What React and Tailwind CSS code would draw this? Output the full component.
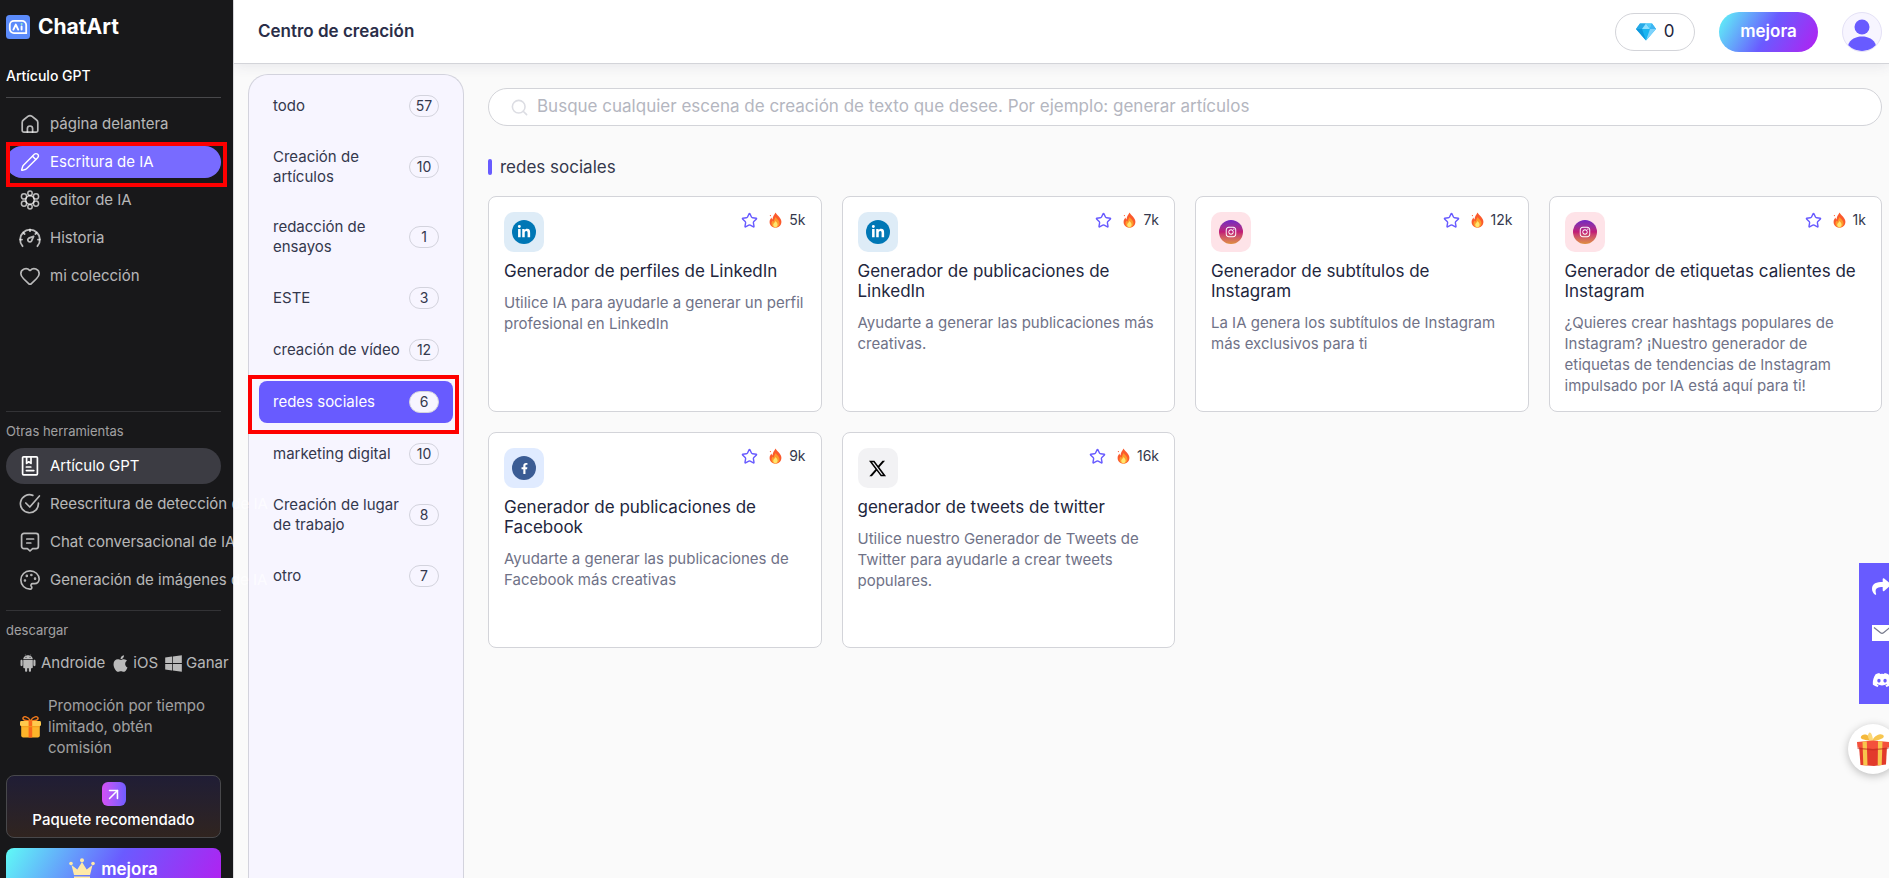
import { Heart, Palette, Pencil, Search, Star, ArrowUpRight } from 'lucide-react';
import { AiFillAndroid } from 'react-icons/ai';
import { FaApple, FaWindows, FaLinkedinIn, FaFacebookF, FaInstagram, FaShare, FaDiscord } from 'react-icons/fa';
import { FaXTwitter } from 'react-icons/fa6';

const stroke = { width: 22, height: 22, viewBox: '0 0 22 22', fill: 'none', stroke: 'currentColor', strokeWidth: 1.7, strokeLinecap: 'round', strokeLinejoin: 'round', 'aria-hidden': true };

const HomeIcon = () => (
  <svg {...stroke}>
    <path d="M5 19.200a1.800 1.800 0 0 1-1.800-1.800V9.400a3 3 0 0 1 1.200-2.400l4.800-3.800a3 3 0 0 1 3.600 0L17.600 7a3 3 0 0 1 1.200 2.400v8a1.800 1.800 0 0 1-1.800 1.800z" />
    <path d="M8.400 19v-3.400a2.600 2.600 0 0 1 5.200 0V19" />
  </svg>
);

const FlowerIcon = () => (
  <svg {...stroke} strokeWidth={1.5}>
    <circle cx="11" cy="11" r="4.200" />
    <circle cx="11" cy="4.200" r="2.200" />
    <circle cx="11" cy="17.800" r="2.200" />
    <circle cx="5" cy="7.400" r="2.600" />
    <circle cx="17" cy="7.400" r="2.600" />
    <circle cx="5" cy="14.600" r="2.600" />
    <circle cx="17" cy="14.600" r="2.600" />
  </svg>
);

const GaugeIcon = () => (
  <svg {...stroke} strokeWidth={1.8}>
    <path d="M3.600 19.200a9.900 9.900 0 1 1 14.800 0" />
    <path d="M11 2.600v1.600M1.400 12.600H3M19 12.600h1.600M4.600 6l1 1M17.400 6l-1 1" />
    <path d="M14.600 9.400l-4.800 1.800a2 2 0 1 0 2.800 2.600z" />
  </svg>
);

const BookIcon = () => (
  <svg {...stroke}>
    <rect x="3.600" y="1.800" width="14.800" height="18" rx="1" />
    <path d="M7.600 2v6.400l2.200-1.600L12 8.400V2M7.400 12h4.400M7.400 15.600h7.400" />
  </svg>
);

const CheckIcon = () => (
  <svg {...stroke}>
    <path d="M13.800 2.400A9 9 0 1 0 19.400 10" />
    <path d="M6.800 10l4 4L20.400 3" />
  </svg>
);

const ChatIcon = () => (
  <svg {...stroke}>
    <path d="M5 2.400h12a2.400 2.400 0 0 1 2.400 2.400v10.400a2.400 2.400 0 0 1-2.400 2.400h-3.400L11 20l-2.600-2.400H5a2.400 2.400 0 0 1-2.400-2.400V4.800A2.400 2.400 0 0 1 5 2.400z" />
    <path d="M7.800 8h6.800M7.800 12h4" />
  </svg>
);

const Flame = () => (
  <svg width="13" height="16" viewBox="0 0 13 16" aria-hidden="true">
    <path d="M6.600.4c1 2.600 5.800 5 5.800 9.400 0 3.600-2.600 5.800-5.900 5.800S.6 13.400.6 10c0-2.200 1-3.400 1.800-4.600.2 1 .5 1.600 1.100 2C3.600 4.400 5.200 2.800 6.600.4z" fill="#fb5a2c" />
    <path d="M6.800 5c.7 2 3.700 3.200 3.700 6.200 0 2.700-1.800 4.200-4 4.200s-4-1.500-4-4c0-1.300.7-2.200 1.300-2.800.2.700.5 1 1 1.200C4.900 7.800 5.800 6.400 6.800 5z" fill="#fd9a2b" />
    <path d="M6.600 9c.5 1.200 2 1.700 2 3.600 0 1.700-1 2.700-2.200 2.700s-2.200-1-2.200-2.500C4.200 11.200 6 10.600 6.600 9z" fill="#ffe56e" />
    <circle cx="1.400" cy="3.600" r=".6" fill="#fb5a2c" />
  </svg>
);

const Gem = () => (
  <svg width="20" height="18" viewBox="0 0 20 18" aria-hidden="true">
    <path d="M4 .5h12L20 6l-10 11.500L0 6z" fill="#19b5f1" />
    <path d="M4 .5h6L6 6H0z" fill="#27a9e6" />
    <path d="M10 .5L14 6H6z" fill="#8fe0ff" />
    <path d="M10 .5h6L14 6z" fill="#4fcbfb" />
    <path d="M16 .5L20 6h-6z" fill="#3fb4f2" />
    <path d="M0 6h6l4 11.500z" fill="#0e98dd" />
    <path d="M20 6h-6l-4 11.500z" fill="#7dd2fb" />
  </svg>
);

const GiftYellow = () => (
  <svg width="21" height="22" viewBox="0 0 21 22" className="shrink-0" aria-hidden="true">
    <path d="M10.500 5C8 0 3.500 0 3 2s3 3 7.500 3zM10.500 5C13 0 17.500 0 18 2s-3 3-7.500 3z" fill="none" stroke="#f07a1c" strokeWidth="1.500" />
    <rect x="1.200" y="9" width="18.600" height="12.500" rx="2" fill="#fdb42a" />
    <rect x="0" y="5" width="21" height="5.200" rx="1.400" fill="#ffc94d" />
    <rect x="8.600" y="5" width="3.600" height="16.500" fill="#f9671b" />
    <path d="M1.200 10.200h18.600v1H1.200z" fill="#f29a1b" />
  </svg>
);

const GiftRed = () => (
  <svg width="32" height="34" viewBox="0 0 32 34" aria-hidden="true">
    <path d="M15 9C11 8 5 8 4 6s3-4 5.500-3.200S14 6 15 9z" fill="#f5b93c" />
    <path d="M15 9c1-3 5-7 8.500-6.800S28 5 25 6.500 19 9 15 9z" fill="#f7c650" />
    <path d="M13 9C11 6 10 3 12 1s4 4 4 8z" fill="#fbd878" />
    <path d="M2 14h28l-1 18.500L17 34 3.500 33z" fill="#e23b2c" />
    <path d="M0 10l16-1.500L32 10v5.500L16 17 .5 15.500z" fill="#f4503c" />
    <path d="M5.500 9.500h4.300l.7 23.900-4.200-.2zM21 9.300h4.500l-.8 23.700-4 .5z" fill="#f8c54c" />
    <path d="M.5 15.500L16 17l15.500-1.500v1.400L16 18.400.5 17z" fill="#bf2b20" opacity=".6" />
  </svg>
);

const Crown = () => (
  <svg width="26" height="24" viewBox="0 0 26 24" aria-hidden="true">
    <path d="M2.500 7l5.800 4.500L13 4l4.700 7.500L23.500 7 21 17H5z" fill="#ffe9a8" />
    <path d="M5 18.500h16V21H5z" fill="#ffe9a8" />
    <circle cx="13" cy="2.200" r="2" fill="#ffe9a8" />
    <circle cx="2" cy="5.500" r="1.800" fill="#ffe9a8" />
    <circle cx="24" cy="5.500" r="1.800" fill="#ffe9a8" />
  </svg>
);

const Logo = () => (
  <svg width="24" height="24" viewBox="0 0 24 24" aria-hidden="true">
    <rect width="24" height="24" rx="3.500" fill="#5b8bfb" />
    <path d="M8 5.800h8a4.200 4.200 0 0 1 4.200 4.200v8.200H8A4.200 4.200 0 0 1 3.800 14v-4A4.200 4.200 0 0 1 8 5.800z" fill="none" stroke="#fff" strokeWidth="1.800" />
    <path d="M7.400 14.600l2.400-5 2.400 5M15.600 11.400v3.200" fill="none" stroke="#fff" strokeWidth="1.900" strokeLinecap="round" strokeLinejoin="round" />
    <circle cx="15.600" cy="8.900" r="1" fill="#8ff5c8" />
  </svg>
);

const menu = [
  { label: 'página delantera', icon: <HomeIcon /> },
  { label: 'Escritura de IA', icon: <Pencil size={20} strokeWidth={1.7} />, active: true },
  { label: 'editor de IA', icon: <FlowerIcon /> },
  { label: 'Historia', icon: <GaugeIcon /> },
  { label: 'mi colección', icon: <Heart size={22} strokeWidth={1.8} /> },
];

const tools = [
  { label: 'Artículo GPT', icon: <BookIcon />, active: true },
  { label: 'Reescritura de detección de IA', icon: <CheckIcon /> },
  { label: 'Chat conversacional de IA', icon: <ChatIcon /> },
  { label: 'Generación de imágenes de IA', icon: <Palette size={22} strokeWidth={1.8} /> },
];

const categories = [
  { name: 'todo', count: 57 },
  { name: 'Creación de artículos', count: 10 },
  { name: 'redacción de ensayos', count: 1 },
  { name: 'ESTE', count: 3 },
  { name: 'creación de vídeo', count: 12 },
  { name: 'redes sociales', count: 6, active: true },
  { name: 'marketing digital', count: 10 },
  { name: 'Creación de lugar de trabajo', count: 8 },
  { name: 'otro', count: 7 },
];

const cards = [
  { brand: 'linkedin', title: 'Generador de perfiles de LinkedIn', text: 'Utilice IA para ayudarle a generar un perfil profesional en LinkedIn', uses: '5k' },
  { brand: 'linkedin', title: 'Generador de publicaciones de LinkedIn', text: 'Ayudarte a generar las publicaciones más creativas.', uses: '7k' },
  { brand: 'instagram', title: 'Generador de subtítulos de Instagram', text: 'La IA genera los subtítulos de Instagram más exclusivos para ti', uses: '12k' },
  { brand: 'instagram', title: 'Generador de etiquetas calientes de Instagram', text: '¿Quieres crear hashtags populares de Instagram? ¡Nuestro generador de etiquetas de tendencias de Instagram impulsado por IA está aquí para ti!', uses: '1k' },
  { brand: 'facebook', title: 'Generador de publicaciones de Facebook', text: 'Ayudarte a generar las publicaciones de Facebook más creativas', uses: '9k' },
  { brand: 'x', title: 'generador de tweets de twitter', text: 'Utilice nuestro Generador de Tweets de Twitter para ayudarle a crear tweets populares.', uses: '16k' },
];

const brands = {
  linkedin: { box: 'bg-[#deecf7]', dot: 'bg-[#0077b5] text-white', icon: <FaLinkedinIn size={14} /> },
  instagram: { box: 'bg-[#fee3e8]', dot: 'bg-linear-to-b from-[#7024c4] via-[#c21975] to-[#df8f3b] text-white', icon: <FaInstagram size={12} /> },
  facebook: { box: 'bg-[#e0ebff]', dot: 'bg-[#3b5c94] text-white', icon: <FaFacebookF size={11} /> },
  x: { box: 'bg-[#f2f2f4]', dot: 'text-black', icon: <FaXTwitter size={19} /> },
};

function Sidebar() {
  return (
    <aside className="relative z-10 w-[233px] shrink-0 bg-[#18181a] pr-3 pl-[6px] text-[15px] text-white/70">
      <a href="#" className="flex items-center gap-2 pt-[15px] text-white">
        <Logo />
        <span className="text-[21px] leading-6 font-bold">ChatArt</span>
      </a>
      <h2 className="mt-6 border-b border-[#48484b] pt-[3px] pb-[11px] text-sm leading-5 font-medium text-white">Artículo GPT</h2>

      <nav className="mt-[10px] flex flex-col gap-[6px]">
        {menu.map((m) => (
          <a key={m.label} href="#" className={`relative flex h-8 items-center gap-[9px] rounded-full pl-3 whitespace-nowrap ${m.active ? 'bg-[#786bff] text-white' : ''}`}>
            <span className="flex w-[23px] shrink-0 justify-center">{m.icon}</span>
            {m.label}
            {m.active && <span className="absolute -top-1 -right-[6px] -bottom-[9px] left-0 border-4 border-[#fe0000]" />}
          </a>
        ))}
      </nav>

      <h3 className="mt-[119px] border-t border-[#333336] pt-[9px] pb-px text-[13px] leading-5 text-white/60">Otras herramientas</h3>
      <nav className="mt-[6px] flex flex-col gap-[2px]">
        {tools.map((t) => (
          <a key={t.label} href="#" className={`flex h-9 items-center gap-[9px] rounded-full pl-3 whitespace-nowrap ${t.active ? 'bg-[#3c3c43] text-white' : ''}`}>
            <span className="flex w-[23px] shrink-0 justify-center">{t.icon}</span>
            {t.label}
          </a>
        ))}
      </nav>

      <h3 className="mt-3 border-t border-[#333336] pt-[9px] text-[13px] leading-5 text-white/60">descargar</h3>
      <div className="mt-3 flex h-[22px] items-center gap-[6px] pl-3 whitespace-nowrap">
        <a href="#" className="flex items-center gap-[3px]"><AiFillAndroid size={20} />Androide</a>
        <a href="#" className="flex items-center gap-[3px]"><FaApple size={19} />iOS</a>
        <a href="#" className="flex items-center gap-[3px]"><FaWindows size={19} />Ganar</a>
      </div>
      <a href="#" className="mt-[21px] flex items-center gap-[7px] pr-3 pl-[14px] leading-[21px] text-white/60">
        <GiftYellow />
        Promoción por tiempo limitado, obtén comisión
      </a>

      <button className="mt-[17px] flex h-[63px] w-full flex-col items-center rounded-lg border border-[#48484b] bg-linear-to-b from-[#201d35] to-[#30241f] pt-[6px] font-medium text-white">
        <span className="flex size-6 items-center justify-center rounded-md bg-linear-to-r from-[#d44ff5] to-[#6f5cff]"><ArrowUpRight size={19} /></span>
        <span className="mt-1 leading-5">Paquete recomendado</span>
      </button>
      <button className="mt-[10px] flex h-11 w-full items-center justify-center gap-[6px] rounded-lg bg-linear-[120deg] from-[#5ffbf6] via-[#6a5bff] to-[#b41ff0] text-[17px] font-semibold text-white">
        <Crown />
        mejora
      </button>
    </aside>
  );
}

function Categories() {
  return (
    <nav className="flex w-[216px] shrink-0 flex-col gap-[10px] rounded-t-[20px] border border-b-0 border-[#d3d3dd] bg-[#f7f5ff] px-[10px] pt-[10px] text-[15px] leading-5 text-[#34384d]">
      {categories.map((c) => (
        <button key={c.name} className={`relative flex items-center justify-between rounded-lg px-[14px] py-[10px] text-left ${c.active ? 'bg-[#685bff] text-white' : ''}`}>
          <span className="w-[132px]">{c.name}</span>
          <span className="flex h-[22px] w-[30px] shrink-0 items-center justify-center rounded-full border border-[#d3d3dd] bg-[#f7f5ff] text-sm text-[#34384d]">{c.count}</span>
          {c.active && <span className="absolute -top-[6px] -right-[6px] -bottom-[11px] -left-[11px] border-4 border-[#fe0000]" />}
        </button>
      ))}
    </nav>
  );
}

function Card({ card }) {
  const b = brands[card.brand];
  return (
    <article className="rounded-lg border border-[#d3d4d9] bg-white p-[15px]">
      <div className="flex items-start justify-between">
        <div className={`flex size-10 items-center justify-center rounded-[10px] ${b.box}`}>
          <span className={`flex size-6 items-center justify-center rounded-full ${b.dot}`}>{b.icon}</span>
        </div>
        <div className="flex h-4 items-center text-sm text-[#34384d]">
          <button aria-label="Añadir a mi colección" className="mr-[11px] text-[#685bff]"><Star size={17} strokeWidth={2} strokeLinejoin="miter" /></button>
          <Flame />
          <span className="ml-[7px]">{card.uses}</span>
        </div>
      </div>
      <h3 className="mt-[9px] text-[17px] leading-5 text-[#22263d]">{card.title}</h3>
      <p className="mt-[11px] text-[15px] leading-[21px] text-[#6f7287]">{card.text}</p>
    </article>
  );
}

export default function App() {
  return (
    <div className="flex h-screen overflow-hidden bg-[#fafafa] font-[Inter,'Open_Sans',sans-serif]">
      <Sidebar />
      <div className="relative flex min-w-0 flex-1 flex-col border-l border-[#dcdcdf]">
        <header className="flex h-16 shrink-0 items-center border-b border-[#d3d4d9] bg-white pr-[7px] pl-6 shadow-[0_2px_12px_rgba(60,60,100,0.1)]">
          <h1 className="flex-1 text-[17px] font-semibold text-[#2a2e48]">Centro de creación</h1>
          <button className="flex h-[38px] w-20 items-center justify-center gap-2 rounded-full border border-[#d3d4d9] text-[17px] text-[#22263d]"><Gem />0</button>
          <button className="ml-6 h-10 w-[99px] rounded-full bg-linear-[120deg] from-[#5ffbf6] via-[#6a5bff] to-[#b41ff0] text-[17px] font-semibold text-white">mejora</button>
          <button aria-label="Cuenta" className="ml-6 size-10 overflow-hidden rounded-full border border-[#e4e1f6] bg-[#f7f5ff]">
            <svg viewBox="0 0 38 38" fill="#685bff" aria-hidden="true">
              <circle cx="19" cy="14" r="7.500" />
              <path d="M5 32.500C7 26 13 23.500 19 23.500s12 2.500 14 9C29 37 24 38 19 38S9 37 5 32.500z" />
            </svg>
          </button>
        </header>

        <div className="flex min-h-0 flex-1 gap-6 pt-[10px] pr-[7px] pl-[14px]">
          <Categories />
          <main className="min-w-0 flex-1 pt-[14px]">
            <label className="flex h-[38px] items-center gap-2 rounded-full border border-[#d3d4d9] bg-white pl-[21px]">
              <Search size={19} strokeWidth={2} className="text-[#dcdde3]" />
              <input type="search" aria-label="Buscar" placeholder="Busque cualquier escena de creación de texto que desee. Por ejemplo: generar artículos" className="flex-1 bg-transparent text-[17px] outline-none placeholder:text-[#b4b6c0]" />
            </label>
            <h2 className="mt-[31px] flex items-center gap-2 text-[17px] leading-5 text-[#34384d]">
              <span className="h-4 w-1 rounded-sm bg-[#685bff]" />
              redes sociales
            </h2>
            <section className="mt-[19px] grid auto-rows-fr grid-cols-4 gap-5">
              {cards.map((c) => <Card key={c.title} card={c} />)}
            </section>
          </main>
        </div>

        <div className="absolute top-[563px] -right-4 flex h-[141px] w-[46px] flex-col items-start justify-around bg-[#685bff] pl-[13px] text-white">
          <a href="#" aria-label="Compartir"><FaShare size={19} /></a>
          <a href="#" aria-label="Correo">
            <svg width="20" height="16" viewBox="0 0 20 16" aria-hidden="true">
              <rect width="20" height="16" fill="#fff" />
              <path d="M2 2.500l6.500 5.300a2.400 2.400 0 0 0 3 0L18 2.500" fill="none" stroke="#777a8c" strokeWidth="1.200" />
            </svg>
          </a>
          <a href="#" aria-label="Discord"><FaDiscord size={20} /></a>
        </div>
        <button aria-label="Regalo" className="absolute top-[724px] -right-[9px] flex size-[50px] items-center justify-center rounded-full bg-white shadow-[0_2px_8px_rgba(0,0,0,0.25)]"><GiftRed /></button>
      </div>
    </div>
  );
}
